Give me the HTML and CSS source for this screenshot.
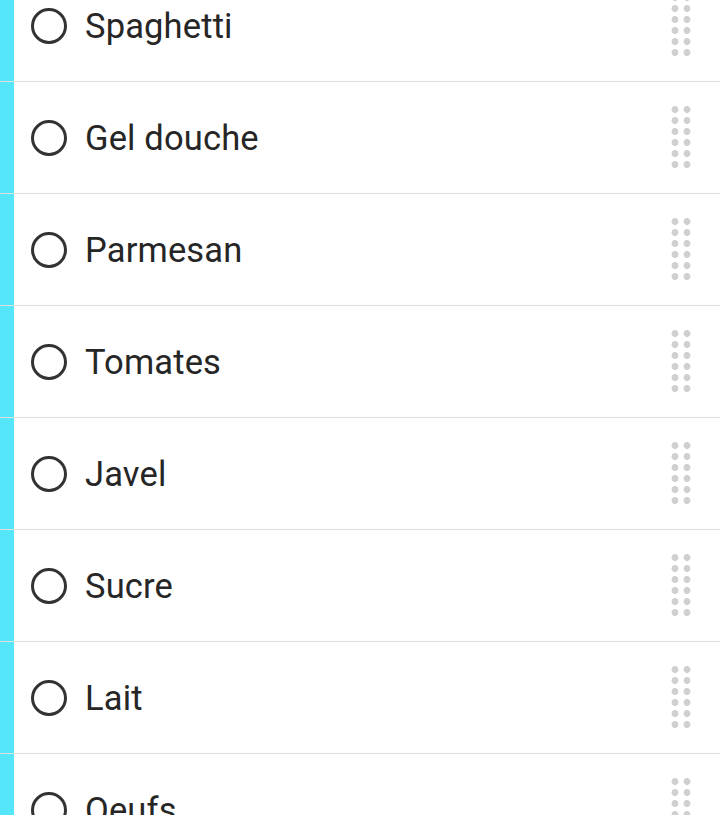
FILE: index.html
```html
<!DOCTYPE html>
<html lang="fr">
<head>
<meta charset="utf-8">
<title>Liste</title>
<link rel="stylesheet" href="styles.css">
</head>
<body>
<ul class="list">
  <li class="row"><span class="bar"></span><span class="check"></span><span class="label">Spaghetti</span><span class="handle"></span></li>
  <li class="row"><span class="bar"></span><span class="check"></span><span class="label">Gel douche</span><span class="handle"></span></li>
  <li class="row"><span class="bar"></span><span class="check"></span><span class="label">Parmesan</span><span class="handle"></span></li>
  <li class="row"><span class="bar"></span><span class="check"></span><span class="label">Tomates</span><span class="handle"></span></li>
  <li class="row"><span class="bar"></span><span class="check"></span><span class="label">Javel</span><span class="handle"></span></li>
  <li class="row"><span class="bar"></span><span class="check"></span><span class="label">Sucre</span><span class="handle"></span></li>
  <li class="row"><span class="bar"></span><span class="check"></span><span class="label">Lait</span><span class="handle"></span></li>
  <li class="row"><span class="bar"></span><span class="check"></span><span class="label">Oeufs</span><span class="handle"></span></li>
</ul>
</body>
</html>
```
FILE: styles.css
```css
html, body {
  margin: 0;
  padding: 0;
  background: #ffffff;
  overflow: hidden;
  height: 815px;
}
.list {
  list-style: none;
  margin: -30px 0 0 0;
  padding: 0;
}
.row {
  display: flex;
  align-items: center;
  height: 111px;
  border-bottom: 1px solid #dedede;
  background: linear-gradient(to right, #55e6fc 14px, #ffffff 14px);
  font-family: Roboto, "Noto Sans", sans-serif;
}
.bar {
  width: 14px;
  align-self: stretch;
  background: #55e6fc;
  flex: none;
}
.check {
  flex: none;
  box-sizing: border-box;
  width: 36px;
  height: 36px;
  margin-left: 17px;
  border: 3px solid #333333;
  border-radius: 50%;
}
.label {
  margin-left: 18px;
  padding-top: 1px;
  font-size: 34.5px;
  line-height: 40px;
  color: #262626;
  letter-spacing: 0.15px;
}
.handle {
  flex: none;
  margin-left: auto;
  margin-right: 27px;
  width: 24px;
  height: 66px;
  margin-top: -2px;
  background: radial-gradient(circle, #d0d0d0 3.1px, rgba(208,208,208,0) 3.8px) 0 0 / 12px 11px;
}
```
